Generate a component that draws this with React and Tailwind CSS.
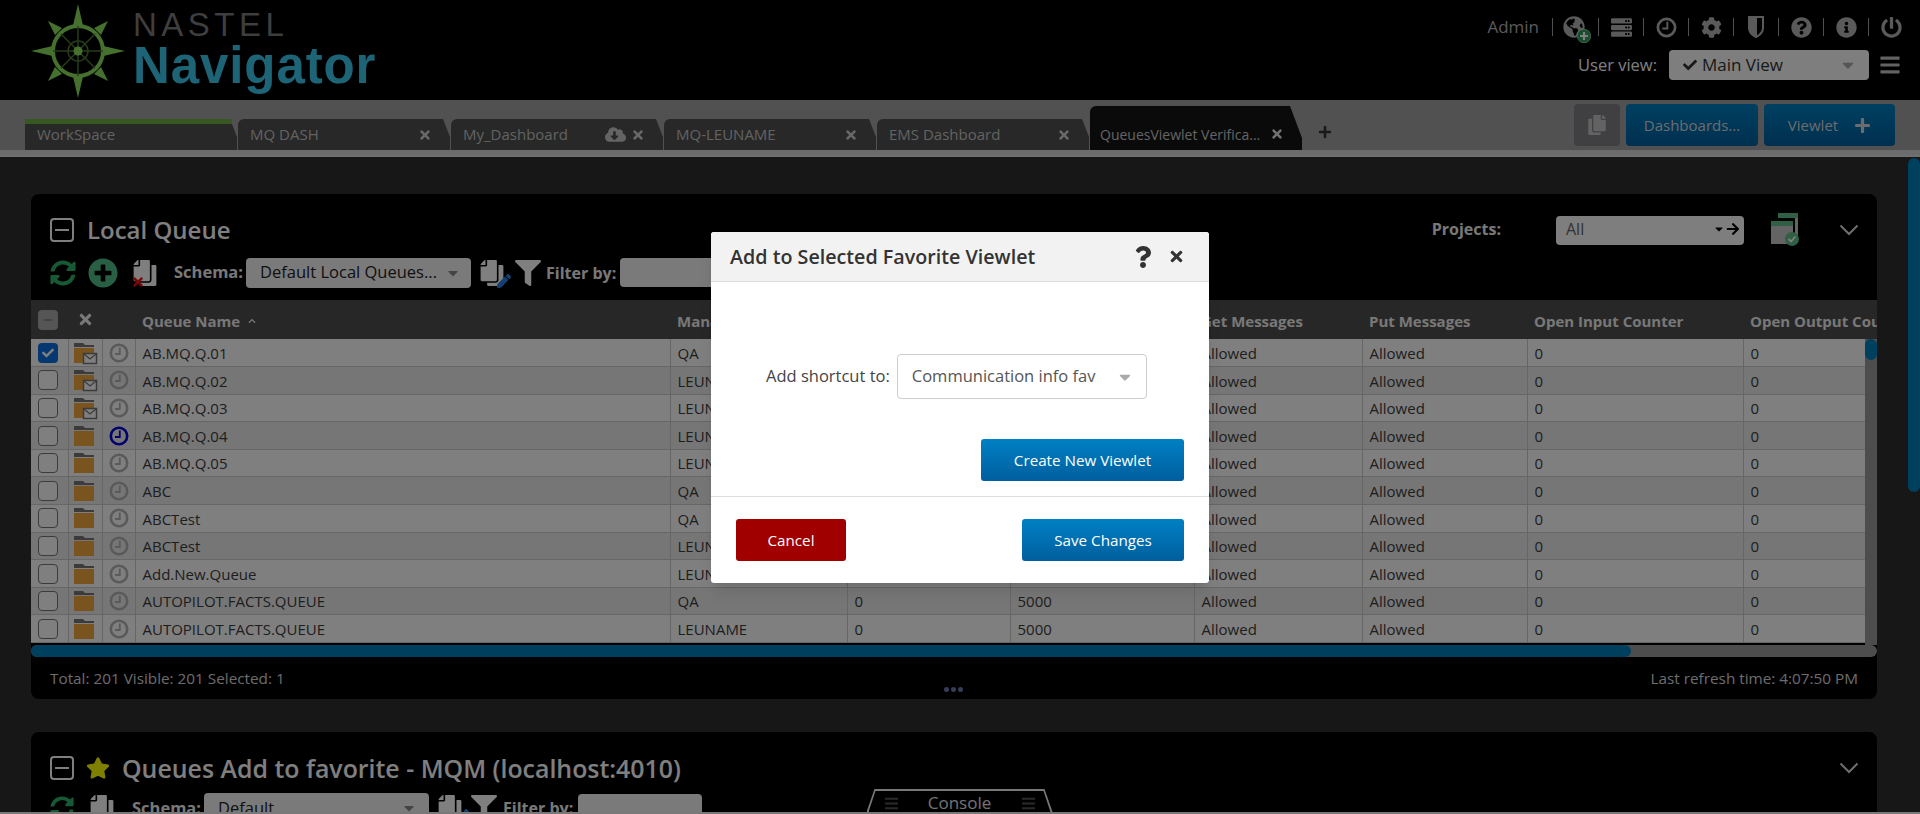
import React from 'react';
import {
  FaGlobeAmericas, FaServer, FaCog, FaQuestionCircle, FaInfoCircle, FaPowerOff,
  FaBars, FaCheck, FaPlus, FaTimes, FaCopy, FaSyncAlt, FaPlusCircle, FaFilter, FaStar,
  FaCloudDownloadAlt, FaArrowRight, FaQuestion, FaCaretDown, FaChevronUp,
  FaPen, FaMinus,
} from 'react-icons/fa';

const tabs = [
  { name: 'MQ DASH' },
  { name: 'My_Dashboard', cloud: true },
  { name: 'MQ-LEUNAME' },
  { name: 'EMS Dashboard' },
];

const colWidths = [37, 34, 33, 535, 177, 163, 184, 168, 165, 216, 220];

const rows = [
  { name: 'AB.MQ.Q.01', mgr: 'QA', checked: true, mail: true },
  { name: 'AB.MQ.Q.02', mgr: 'LEUNAME', mail: true },
  { name: 'AB.MQ.Q.03', mgr: 'LEUNAME', mail: true },
  { name: 'AB.MQ.Q.04', mgr: 'LEUNAME', active: true },
  { name: 'AB.MQ.Q.05', mgr: 'LEUNAME' },
  { name: 'ABC', mgr: 'QA' },
  { name: 'ABCTest', mgr: 'QA' },
  { name: 'ABCTest', mgr: 'LEUNAME' },
  { name: 'Add.New.Queue', mgr: 'LEUNAME' },
  { name: 'AUTOPILOT.FACTS.QUEUE', mgr: 'QA' },
  { name: 'AUTOPILOT.FACTS.QUEUE', mgr: 'LEUNAME' },
];

function Logo() {
  return (
    <svg width="94" height="94" viewBox="0 0 94 94" className="ml-[31px] mt-[4px] shrink-0">
      <g fill="#8ce05a">
        <polygon points="47,0 53,26 41,26" />
        <polygon points="47,94 53,68 41,68" />
        <polygon points="0,47 26,41 26,53" />
        <polygon points="94,47 68,41 68,53" />
        <polygon points="17,17 31,24 24,31" />
        <polygon points="77,17 70,31 63,24" />
        <polygon points="17,77 24,63 31,70" />
        <polygon points="77,77 63,70 70,63" />
      </g>
      <circle cx="47" cy="47" r="25" fill="#000" stroke="#8ce05a" strokeWidth="4" />
      <g stroke="#4c7a35" strokeWidth="1.5" fill="none">
        <path d="M47 22V72M22 47H72M30 30L64 64M64 30L30 64" />
        <circle cx="47" cy="47" r="10" />
      </g>
      <circle cx="47" cy="47" r="4.5" fill="#8ce05a" />
    </svg>
  );
}

// thick ring clock, used in the top bar and in the table rows
function ClockGlyph({ size = 19, className = '' }) {
  return (
    <svg width={size} height={size} viewBox="0 0 20 20" className={className}>
      <circle cx="10" cy="10" r="8.2" fill="none" stroke="currentColor" strokeWidth="2.6" />
      <path d="M10.8 4.5V11H6" fill="none" stroke="currentColor" strokeWidth="1.8" />
    </svg>
  );
}

function ShieldGlyph() {
  return (
    <svg width="16" height="22" viewBox="0 0 16 22">
      <path d="M1 1H15V12C15 16.500 11 19.500 8 21C5 19.500 1 16.500 1 12Z" fill="none" stroke="currentColor" strokeWidth="2" />
      <path d="M1 1H9V20.500C5 19.500 1 16.500 1 12Z" fill="currentColor" />
    </svg>
  );
}

function ChevronThin() {
  return (
    <svg width="20" height="12" viewBox="0 0 20 12" className="shrink-0 text-[#ddd]">
      <path d="M1.500 1.500L10 10L18.500 1.500" fill="none" stroke="currentColor" strokeWidth="2" />
    </svg>
  );
}

function Tab({ tab }) {
  return (
    <div className="flex h-[31px] w-[212px] items-center rounded-tl-md bg-[#505050] pl-[12px] text-[15px] text-[#c4c4c4] [clip-path:polygon(0_0,205px_0,212px_18px,212px_100%,0_100%)]">
      <span className="flex-1">{tab.name}</span>
      {tab.cloud && <FaCloudDownloadAlt className="mr-[5px] text-[21px] text-[#c8c8c8]" />}
      <FaTimes className="mr-[18px] text-[14px] text-[#d0d0d0]" />
    </div>
  );
}

function TopIcon({ children }) {
  return (
    <>
      <span className="h-[18px] w-px shrink-0 bg-[#a0a0a0]" />
      <span className="flex w-[44px] items-center justify-center text-[21px]">{children}</span>
    </>
  );
}

function Header() {
  return (
    <div className="flex h-[100px] shrink-0 bg-black">
      <Logo />
      <div className="ml-[8px] flex flex-col">
        <div className="mt-[7px] text-[33px] font-light leading-[36px] tracking-[4.5px] text-[#7c7c7c] [font-family:'Liberation_Sans',sans-serif]">
          NASTEL
        </div>
        <div className="-mt-[2px] text-[51px] font-bold leading-[50px] tracking-[0.9px] text-[#3cc8ee] [font-family:'Liberation_Sans',sans-serif]">
          Navigator
        </div>
      </div>
      <div className="ml-auto mr-[7px] flex flex-col items-end">
        <div className="mt-[16px] flex h-[22px] items-center text-[#b4b4b4]">
          <span className="text-[17px]">Admin</span>
          <span className="ml-[13px] h-[18px] w-px bg-[#a0a0a0]" />
          <span className="flex w-[42px] justify-center">
            <span className="relative text-[22px]">
              <FaGlobeAmericas />
              <FaPlusCircle className="absolute -bottom-[5px] -right-[6px] rounded-full bg-white text-[14px] text-[#2f9e5c]" />
            </span>
          </span>
          <span className="w-[3px]" />
          <TopIcon><FaServer /></TopIcon>
          <TopIcon><ClockGlyph size={21} /></TopIcon>
          <TopIcon><FaCog /></TopIcon>
          <TopIcon><ShieldGlyph /></TopIcon>
          <TopIcon><FaQuestionCircle /></TopIcon>
          <TopIcon><FaInfoCircle /></TopIcon>
          <TopIcon><FaPowerOff /></TopIcon>
        </div>
        <div className="mr-[12px] mt-[12px] flex items-center">
          <span className="mr-[12px] text-[16.500px] text-white">User view:</span>
          <div className="flex h-[30px] w-[200px] items-center rounded bg-[#fcfcfc] pl-[14px] pr-[12px] text-[17px] text-[#333]">
            <FaCheck className="mr-[5px] text-[14px]" />
            <span className="flex-1">Main View</span>
            <FaCaretDown className="text-[18px] text-[#aaa]" />
          </div>
          <FaBars className="ml-[10px] text-[22px] text-[#c4c4c4]" />
        </div>
      </div>
    </div>
  );
}

function TabBar() {
  return (
    <>
      <div className="flex h-[50px] shrink-0 items-end bg-[#a2a2a2] pl-[25px]">
        <div className="mr-px flex h-[31px] w-[212px] items-center border-t-[5px] border-[#6fb040] bg-[#505050] pb-[5px] pl-[12px] text-[15px] text-[#c4c4c4] [clip-path:polygon(0_0,205px_0,212px_18px,212px_100%,0_100%)]">
          WorkSpace
        </div>
        <div className="flex gap-px">
          {tabs.map((t) => <Tab key={t.name} tab={t} />)}
        </div>
        <div className="ml-px flex h-[44px] w-[212px] items-center rounded-tl-md bg-[#141414] pl-[10px] pt-[12px] text-[14px] text-[#c8c8c8] [clip-path:polygon(0_0,200px_0,212px_32px,212px_100%,0_100%)]">
          <span className="flex-1 whitespace-nowrap">QueuesViewlet Verifica...</span>
          <FaTimes className="mr-[18px] shrink-0 text-[14px] text-[#e0e0e0]" />
        </div>
        <FaPlus className="mb-[11px] ml-[16px] text-[14px] text-[#333]" />
        <div className="mb-[4px] ml-auto mr-[25px] flex h-[42px] gap-[6px]">
          <div className="flex w-[46px] items-center justify-center rounded bg-[#808084] text-[20px] text-[#c4c4c4]">
            <FaCopy />
          </div>
          <div className="flex w-[132px] items-center justify-center rounded bg-gradient-to-b from-[#0080c4] to-[#005f9e] text-[15px] text-[#d8d8d8]">
            Dashboards...
          </div>
          <div className="flex w-[131px] items-center justify-center gap-[16px] rounded bg-gradient-to-b from-[#0080c4] to-[#005f9e] text-[15px] text-[#d8d8d8]">
            Viewlet
            <FaPlus className="text-[17px]" />
          </div>
        </div>
      </div>
      <div className="h-[7px] shrink-0 border-b-[2px] border-[#e0e0e0] bg-[#d8d8d8]" />
    </>
  );
}

function MinusBox() {
  return (
    <span className="flex h-[24px] w-[24px] shrink-0 items-center justify-center rounded border-[2px] border-[#fff]">
      <span className="h-[2px] w-[14px] bg-white" />
    </span>
  );
}

function DocEdit() {
  return (
    <span className="relative block text-[26px] text-white">
      <FaCopy className="-scale-x-100" />
      <FaPen className="absolute -bottom-[2px] -right-[6px] text-[14px] text-[#2a7fe0]" />
    </span>
  );
}

function QueueIcon({ mail }) {
  return (
    <svg width="26" height="24" viewBox="0 0 26 24" className="mx-auto block">
      <path d="M2 2H11L13 4H22V6H2Z" fill="#777" />
      <rect x="2" y="7" width="20" height="15" fill="#f2a93e" />
      {mail && (
        <g>
          <rect x="11.500" y="12.500" width="13" height="10" fill="#fff" stroke="#777" strokeWidth="1.500" />
          <path d="M12 13L18 18L24 13" fill="none" stroke="#777" strokeWidth="1.300" />
        </g>
      )}
    </svg>
  );
}

function ProjectIcon() {
  return (
    <svg width="30" height="34" viewBox="0 0 30 34" className="ml-[27px] shrink-0">
      <rect x="7" y="0" width="20" height="5" fill="#5fbf8a" />
      <path d="M24 5H27V22H24Z" fill="#c8c8c8" />
      <rect x="0" y="8" width="22" height="5" fill="#5fbf8a" />
      <rect x="0" y="13" width="22" height="18" fill="#c8c8c8" />
      <circle cx="21" cy="26" r="7" fill="#5fbf8a" />
      <path d="M17.500 26L20 28.500L24.500 23.500" fill="none" stroke="#fff" strokeWidth="1.800" />
    </svg>
  );
}

function QueueTable() {
  const heads = ['Manager', '', '', 'Get Messages', 'Put Messages', 'Open Input Counter', 'Open Output Counter'];
  return (
    <div className="relative h-[345px] overflow-hidden">
      <table className="table-fixed border-collapse text-[15px] text-[#3c3c3c]" style={{ width: 1932 }}>
        <colgroup>
          {colWidths.map((w, i) => <col key={i} style={{ width: w }} />)}
        </colgroup>
        <thead>
          <tr className="h-[39px] bg-[#4e4e4e] text-left font-bold text-[#f0f0f0]">
            <th className="pl-[7px]">
              <span className="flex h-[20px] w-[20px] items-center justify-center rounded-sm bg-[#aaa]">
                <FaMinus className="text-[10px] text-[#888]" />
              </span>
            </th>
            <th><FaTimes className="ml-[9px] text-[17px]" /></th>
            <th />
            <th className="pl-[7px] pt-[3px]">
              <span className="inline-flex items-center gap-[8px]">Queue Name <FaChevronUp className="text-[8px]" /></span>
            </th>
            {heads.map((h, i) => <th key={i} className="whitespace-nowrap pl-[7px] pt-[3px]">{h}</th>)}
          </tr>
        </thead>
        <tbody>
          {rows.map((r, i) => (
            <tr key={i} className={i % 2 === 0 ? 'h-[27.600px] border-b border-[#ccc] bg-white' : 'h-[27.600px] border-b border-[#ccc] bg-[#ececec]'}>
              <td className="border-r border-[#ccc] pl-[7px]">
                {r.checked ? (
                  <span className="flex h-[20px] w-[20px] items-center justify-center rounded-sm bg-[#0a6fe0] text-[12px] text-white"><FaCheck /></span>
                ) : (
                  <span className="block h-[20px] w-[20px] rounded-sm border border-[#777] bg-white" />
                )}
              </td>
              <td className="border-r border-[#ccc]"><QueueIcon mail={r.mail} /></td>
              <td className="border-r border-[#ccc]">
                <ClockGlyph size={20} className={r.active ? 'mx-auto block text-[#0000e0]' : 'mx-auto block text-[#b4b4b4]'} />
              </td>
              <td className="border-r border-[#ccc] pl-[7px] pt-[1px]">{r.name}</td>
              <td className="border-r border-[#ccc] pl-[7px] pt-[1px]">{r.mgr}</td>
              <td className="border-r border-[#ccc] pl-[7px] pt-[1px]">0</td>
              <td className="border-r border-[#ccc] pl-[7px] pt-[1px]">5000</td>
              <td className="border-r border-[#ccc] pl-[7px] pt-[1px]">Allowed</td>
              <td className="border-r border-[#ccc] pl-[7px] pt-[1px]">Allowed</td>
              <td className="border-r border-[#ccc] pl-[7px] pt-[1px]">0</td>
              <td className="pl-[7px] pt-[1px]">0</td>
            </tr>
          ))}
        </tbody>
      </table>
      {/* table's own vertical scrollbar */}
      <div className="absolute bottom-0 right-0 top-[39px] w-[12px] bg-[#9a9a9a]">
        <div className="h-[21px] rounded-full bg-[#0080be]" />
      </div>
    </div>
  );
}

function LocalQueuePanel() {
  return (
    <div className="mt-[37px] rounded-lg bg-black">
      <div className="flex h-[106px] flex-col pl-[19px]">
        <div className="mt-[23px] flex h-[26px] items-center">
          <MinusBox />
          <span className="ml-[13px] text-[24px] font-semibold leading-none text-white">Local Queue</span>
          <span className="ml-auto pb-[3px] text-[16px] font-bold text-[#f0f0f0]">Projects:</span>
          <div className="ml-[55px] flex h-[29px] w-[188px] items-center rounded bg-[#fcfcfc] pb-[2px] pl-[10px] pr-[4px] text-[16px] text-[#666]">
            <span className="flex-1">All</span>
            <FaCaretDown className="text-[12px] text-black" />
            <FaArrowRight className="ml-[1px] text-[14px] text-black" />
          </div>
          <ProjectIcon />
          <span className="ml-[38px] mr-[18px]"><ChevronThin /></span>
        </div>
        <div className="mt-[14px] flex h-[31px] items-center">
          <FaSyncAlt className="text-[26px] text-[#2fb368]" />
          <FaPlusCircle className="ml-[12px] text-[30px] text-[#52c08a]" />
          <span className="relative ml-[14px] block text-[26px] text-white">
            <FaCopy className="-scale-x-100" />
            <FaTimes className="absolute -bottom-[3px] -left-[1px] text-[14px] text-[#f01010]" />
          </span>
          <span className="ml-[16px] text-[16.500px] font-bold text-[#f0f0f0]">Schema:</span>
          <div className="ml-[3px] flex h-[30px] w-[225px] items-center rounded bg-[#f4f4f4] pl-[14px] pr-[10px] text-[16.500px] text-[#222]">
            <span className="flex-1 whitespace-nowrap">Default Local Queues...</span>
            <FaCaretDown className="text-[16px] text-[#888]" />
          </div>
          <span className="ml-[8px]"><DocEdit /></span>
          <FaFilter className="ml-[10px] text-[26px] text-white" />
          <span className="ml-[5px] text-[16px] font-bold text-[#f0f0f0]">Filter by:</span>
          <div className="ml-[4px] h-[29px] w-[140px] rounded bg-[#f4f4f4]" />
        </div>
      </div>
      <QueueTable />
      {/* horizontal scrollbar */}
      <div className="h-[12px] rounded-full bg-[#9a9a9a]">
        <div className="h-full w-[1600px] rounded-full bg-[#0080be]" />
      </div>
      <div className="grid h-[42px] grid-cols-3 px-[19px] pt-[10px] text-[15.300px] text-[#d8d8d8]">
        <span className="whitespace-nowrap">Total: 201 Visible: 201 Selected: 1</span>
        <span className="flex items-end justify-center gap-[2px] pb-[7px]">
          <span className="h-[5px] w-[5px] rounded-full bg-[#6a7ab0]" />
          <span className="h-[5px] w-[5px] rounded-full bg-[#6a7ab0]" />
          <span className="h-[5px] w-[5px] rounded-full bg-[#6a7ab0]" />
        </span>
        <span className="whitespace-nowrap text-right">Last refresh time: 4:07:50 PM</span>
      </div>
    </div>
  );
}

function FavoritePanel() {
  return (
    <div className="mt-[33px] h-[120px] rounded-lg bg-black pl-[19px]">
      <div className="pt-[23px]">
        <div className="flex h-[26px] items-center">
          <MinusBox />
          <FaStar className="ml-[12px] text-[24px] text-[#ffff00]" />
          <span className="ml-[12px] text-[24.900px] font-semibold leading-none text-white">
            Queues Add to favorite - MQM (localhost:4010)
          </span>
          <span className="ml-auto mr-[18px]"><ChevronThin /></span>
        </div>
        <div className="mt-[12px] flex h-[30px] items-center">
          <FaSyncAlt className="text-[24px] text-[#2fb368]" />
          <FaCopy className="ml-[15px] -scale-x-100 text-[26px] text-white" />
          <span className="ml-[17px] text-[16.500px] font-bold text-[#f0f0f0]">Schema:</span>
          <div className="ml-[3px] flex h-[30px] w-[225px] items-center rounded bg-[#f4f4f4] pl-[14px] pr-[12px] text-[16.500px] text-[#222]">
            <span className="flex-1">Default</span>
            <FaCaretDown className="text-[16px] text-[#888]" />
          </div>
          <span className="ml-[8px]"><DocEdit /></span>
          <FaFilter className="ml-[8px] text-[26px] text-white" />
          <span className="ml-[6px] text-[16px] font-bold text-[#f0f0f0]">Filter by:</span>
          <div className="ml-[5px] h-[29px] w-[124px] rounded bg-[#f4f4f4]" />
        </div>
      </div>
    </div>
  );
}

function ConsoleTab() {
  return (
    <div className="absolute bottom-0 left-0 right-0 flex flex-col items-center">
      <div className="ml-[-1px] h-[23px] w-[186px] bg-[#f0f0f0] px-[2px] pt-[2px] [clip-path:polygon(8px_0,178px_0,186px_100%,0_100%)]">
        <div className="flex h-full items-center justify-between bg-black px-[15px] pt-[3px] text-[17px] text-[#e4e4e4] [clip-path:polygon(7px_0,175px_0,182px_100%,0_100%)]">
          <FaBars className="text-[15px] text-[#555]" />
          Console
          <FaBars className="text-[15px] text-[#555]" />
        </div>
      </div>
      <div className="h-[2px] w-full bg-[#f0f0f0]" />
    </div>
  );
}

function FavoriteModal() {
  return (
    <div className="absolute left-[711px] top-[232px] w-[498px] overflow-hidden rounded-[3px] bg-white text-[#333] shadow-lg">
      <div className="flex h-[50px] items-center border-b border-[#ddd] bg-[#f2f2f2] pl-[19px] pr-[24px]">
        <span className="flex-1 whitespace-nowrap text-[19.700px] font-semibold">Add to Selected Favorite Viewlet</span>
        <FaQuestion className="mr-[14px] text-[22px]" />
        <FaTimes className="text-[17px]" />
      </div>
      <div className="h-[214px] pr-[25px]">
        <div className="flex items-center pl-[55px] pt-[72px]">
          <span className="mr-[7px] whitespace-nowrap text-[16.500px] text-[#444]">Add shortcut to:</span>
          <div className="flex h-[45px] w-[250px] items-center rounded border border-[#ccc] pl-[14px] pr-[12px] text-[16.500px] text-[#555]">
            <span className="flex-1 whitespace-nowrap">Communication info fav</span>
            <FaCaretDown className="text-[18px] text-[#aaa]" />
          </div>
        </div>
        <div className="mt-[40px] flex justify-end">
          <button className="h-[42px] w-[203px] rounded-[3px] bg-gradient-to-b from-[#0080c4] to-[#005f9e] text-[15.200px] text-white">
            Create New Viewlet
          </button>
        </div>
      </div>
      <div className="flex h-[87px] items-start justify-between border-t border-[#ddd] px-[25px] pt-[22px]">
        <button className="h-[42px] w-[110px] rounded-[3px] bg-[#a00000] text-[15.200px] text-white">Cancel</button>
        <button className="h-[42px] w-[162px] rounded-[3px] bg-gradient-to-b from-[#0080c4] to-[#005f9e] text-[15.200px] text-white">
          Save Changes
        </button>
      </div>
    </div>
  );
}

export default function App() {
  return (
    <div className="relative flex h-[814px] w-[1920px] flex-col overflow-hidden bg-[#2e2e2e] [font-family:'Open_Sans',sans-serif]">
      <Header />
      <TabBar />
      <div className="flex min-h-0 flex-1">
        <div className="ml-[31px] w-[1846px] shrink-0">
          <LocalQueuePanel />
          <FavoritePanel />
        </div>
        <div className="ml-auto mt-[1px] h-[334px] w-[12px] rounded-full bg-[#0080be]" />
      </div>
      <ConsoleTab />
      <div className="absolute inset-0 bg-black/50" />
      <FavoriteModal />
    </div>
  );
}
